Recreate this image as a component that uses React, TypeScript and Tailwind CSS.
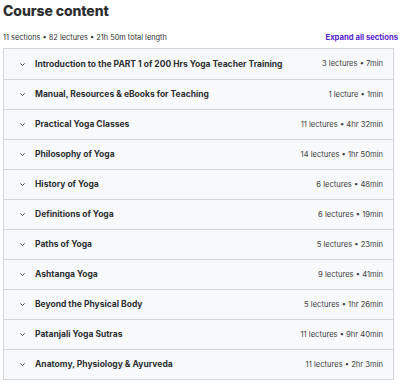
import React from "react";

const sections = [
  { title: "Introduction to the PART 1 of 200 Hrs Yoga Teacher Training", meta: "3 lectures • 7min" },
  { title: "Manual, Resources & eBooks for Teaching", meta: "1 lecture • 1min" },
  { title: "Practical Yoga Classes", meta: "11 lectures • 4hr 32min" },
  { title: "Philosophy of Yoga", meta: "14 lectures • 1hr 50min" },
  { title: "History of Yoga", meta: "6 lectures • 48min" },
  { title: "Definitions of Yoga", meta: "6 lectures • 19min" },
  { title: "Paths of Yoga", meta: "5 lectures • 23min" },
  { title: "Ashtanga Yoga", meta: "9 lectures • 41min" },
  { title: "Beyond the Physical Body", meta: "5 lectures • 1hr 26min" },
  { title: "Patanjali Yoga Sutras", meta: "11 lectures • 9hr 40min" },
  { title: "Anatomy, Physiology & Ayurveda", meta: "11 lectures • 2hr 3min" },
];

const Chevron: React.FC = () => (
  <svg width="7" height="7" viewBox="0 0 10 10" className="shrink-0">
    <path d="M2 3.5 L5 6.5 L8 3.5" fill="none" stroke="#2d2f31" strokeWidth="1.3" />
  </svg>
);

export default function App() {
  return (
    <div className="w-[400px] h-[384px] bg-white px-[3px] font-['Inter',sans-serif] text-[#2d2f31]">
      <h2 className="pt-[1px] text-[14px] leading-[20px] font-extrabold tracking-[-0.1px]">Course content</h2>
      <div className="mt-[11px] flex items-center justify-between h-[12px]">
        <span className="text-[7.4px] text-[#2d2f31]">11 sections • 82 lectures • 21h 50m total length</span>
        <span className="text-[7.7px] font-bold text-[#5624d0] mr-[-1px]">Expand all sections</span>
      </div>
      <div className="mt-[4px] mr-[3px] border border-[#d1d7dc]">
        {sections.map((s, i) => (
          <div
            key={i}
            className={
              "flex items-center h-[30px] bg-[#f7f9fa] pl-[15px] pr-[10px] " +
              (i > 0 ? "border-t border-[#d1d7dc]" : "")
            }
          >
            <Chevron />
            <span className="ml-[9px] flex-1 text-[8.5px] font-bold">{s.title}</span>
            <span className="text-[7.6px] text-[#3e4143]">{s.meta}</span>
          </div>
        ))}
      </div>
    </div>
  );
}
